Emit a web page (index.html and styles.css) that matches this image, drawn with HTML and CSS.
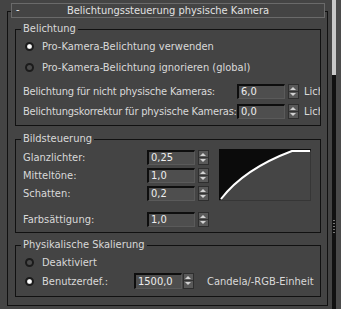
FILE: index.html
```html
<!DOCTYPE html>
<html lang="de">
<head>
    <meta charset="UTF-8">
    <title>Belichtungssteuerung physische Kamera</title>
    <link rel="stylesheet" href="styles.css">
</head>
<body>
    <div class="screen">
        <div class="panel">
            <div class="rollout">
                <div class="rollout-head">
                    <span class="collapse">-</span>
                    Belichtungssteuerung physische Kamera
                </div>

                <!-- Belichtung -->
                <fieldset class="group group-exposure">
                    <legend>Belichtung</legend>
                    <div class="radio-row first"><span class="radio on"></span>Pro-Kamera-Belichtung verwenden</div>
                    <div class="radio-row second"><span class="radio"></span>Pro-Kamera-Belichtung ignorieren (global)</div>
                    <div class="field-row row-ev">
                        <span class="label wide">Belichtung für nicht physische Kameras:</span>
                        <span class="num">6,0</span><span class="spin"></span>
                        <span class="unit">Lichtwert</span>
                    </div>
                    <div class="field-row row-comp">
                        <span class="label wide">Belichtungskorrektur für physische Kameras:</span>
                        <span class="num">0,0</span><span class="spin"></span>
                        <span class="unit">Lichtwert</span>
                    </div>
                </fieldset>

                <!-- Bildsteuerung -->
                <fieldset class="group group-image">
                    <legend>Bildsteuerung</legend>
                    <div class="tone">
                        <div class="tone-fields">
                            <div class="field-row"><span class="label">Glanzlichter:</span><span class="num">0,25</span><span class="spin"></span></div>
                            <div class="field-row"><span class="label">Mitteltöne:</span><span class="num">1,0</span><span class="spin"></span></div>
                            <div class="field-row"><span class="label">Schatten:</span><span class="num">0,2</span><span class="spin"></span></div>
                        </div>
                        <svg class="curve" width="92" height="52" viewBox="0 0 92 52">
                            <rect x="0.5" y="0.5" width="91" height="51" fill="#454545" stroke="#363636"/>
                            <path d="M0,0 L92,0 L92,1.5 L73,1.5 Q25,20 1.5,49.5 L1.5,51 L0,51 Z" fill="#0b0b0b"/>
                            <path d="M2,50 Q25,20 73,2 L91,2" fill="none" stroke="#fff" stroke-width="2"/>
                        </svg>
                    </div>
                    <div class="field-row row-sat"><span class="label">Farbsättigung:</span><span class="num">1,0</span><span class="spin"></span></div>
                </fieldset>

                <!-- Physikalische Skalierung -->
                <fieldset class="group group-scale">
                    <legend>Physikalische Skalierung</legend>
                    <div class="radio-row first"><span class="radio"></span>Deaktiviert</div>
                    <div class="radio-row second">
                        <span class="radio on"></span>
                        <span class="radio-label">Benutzerdef.:</span>
                        <span class="num tall">1500,0</span><span class="spin tall"></span>
                        <span class="unit far">Candela/-RGB-Einheit</span>
                    </div>
                </fieldset>
            </div>
        </div>
        <div class="scrollbar">
            <div class="track"></div>
            <div class="thumb"><span class="grip"></span></div>
        </div>
        <div class="scroll-edge"></div>
    </div>
</body>
</html>
```

FILE: styles.css
```css
body {
    margin: 0;
    background-color: #444444;
    font-family: "DejaVu Sans Condensed", "Liberation Sans", sans-serif;
    font-size: 11px;
    color: #d9d9d9;
}

.screen {
    display: flex;
    height: 309px;
    overflow: hidden;
}

.panel {
    width: 332px;
    flex: none;
}

/* Rollout frame with its title bar sitting on the top edge */
.rollout {
    margin: 11px 0 0 7px;
    width: 319px;
    border: 1px solid #111111;
    padding-bottom: 8px;
}

.rollout-head {
    position: relative;
    margin: -9px 2px 0 3px;
    height: 13px;
    line-height: 13px;
    border: 1px solid #6a6a6a;
    background-color: #444444;
    text-align: center;
    color: #e2e2e2;
}

.collapse {
    position: absolute;
    left: 4px;
    top: -1px;
    color: #f0f0f0;
}

/* Group boxes */
.group {
    margin: 0 6px 0 7px;
    padding: 0 0 6px 7px;
    border: 1px solid #111111;
    min-width: 0;
}

.group legend {
    margin-left: -2px;
    padding: 0 2px;
    line-height: 14px;
}

.group-exposure { margin-top: 4px; }
.group-image { margin-top: 6px; padding-bottom: 5px; }
.group-scale { margin-top: 5px; padding-bottom: 7px; }

.radio-row {
    display: flex;
    align-items: center;
    height: 16px;
    padding-left: 2px;
    white-space: nowrap;
}

.radio-row.first { margin-top: 2px; }
.group-exposure .radio-row.second { margin-top: 5px; }
.group-scale .radio-row.second { margin-top: 3px; }

.radio {
    width: 9px;
    height: 9px;
    margin-right: 8px;
    box-sizing: border-box;
    border: 2px solid #1b1b1b;
    border-radius: 50%;
    background-color: #4a4a4a;
    flex: none;
}

.radio.on {
    background: radial-gradient(circle, #ffffff 0 1.5px, #c4c4c4 2.5px, #8a8a8a 3.5px);
}

.radio-label {
    width: 92px;
    flex: none;
}

.field-row {
    display: flex;
    align-items: center;
    height: 15px;
    overflow: hidden;
    white-space: nowrap;
}

.row-ev { margin-top: 9px; }
.row-comp { margin-top: 5px; }
.row-sat { margin-top: 11px; }

.label {
    width: 124px;
    flex: none;
}

.label.wide {
    width: 214px;
    letter-spacing: -0.2px;
}

/* Spinner field */
.num {
    box-sizing: border-box;
    width: 48px;
    height: 15px;
    padding-left: 2px;
    line-height: 12px;
    flex: none;
    background-color: #4e4e4e;
    border-top: 2px solid #0e0e0e;
    border-left: 2px solid #0e0e0e;
    border-right: 1px solid #5a5a5a;
    border-bottom: 1px solid #5a5a5a;
    color: #ededed;
}

.spin {
    position: relative;
    box-sizing: border-box;
    width: 11px;
    height: 15px;
    margin-left: 3px;
    flex: none;
    border: 1px solid #2e2e2e;
    background: linear-gradient(#595959 6px, #333333 6px, #333333 7px, #595959 7px);
}

.spin::before,
.spin::after {
    content: "";
    position: absolute;
    left: 1px;
    border-left: 3px solid transparent;
    border-right: 3px solid transparent;
}

.spin::before {
    top: 2px;
    border-bottom: 3px solid #d2d2d2;
}

.spin::after {
    top: 8px;
    border-top: 3px solid #d2d2d2;
}

.num.tall { height: 16px; line-height: 13px; }
.spin.tall { height: 16px; margin-left: 1px; }

.unit {
    margin-left: 5px;
}

.unit.far { margin-left: 13px; }

/* Bildsteuerung: fields + curve preview */
.tone {
    display: flex;
    margin-top: 3px;
}

.tone-fields {
    display: flex;
    flex-direction: column;
    gap: 3px;
    padding-top: 1px;
}

.curve {
    display: block;
    margin-left: 10px;
    flex: none;
}

/* Scrollbar at the right edge */
.scrollbar {
    width: 4px;
    flex: none;
    display: flex;
    flex-direction: column;
}

.track {
    height: 75px;
    background-color: #c8c8c8;
}

.thumb {
    flex: 1;
    background-color: #111111;
}

.grip {
    display: block;
    width: 2px;
    height: 13px;
    margin: 145px auto 0;
    background: repeating-linear-gradient(#777777 0 1px, transparent 1px 3px);
}

.scroll-edge {
    width: 5px;
    flex: none;
    background-color: #4a4a4a;
}
```
